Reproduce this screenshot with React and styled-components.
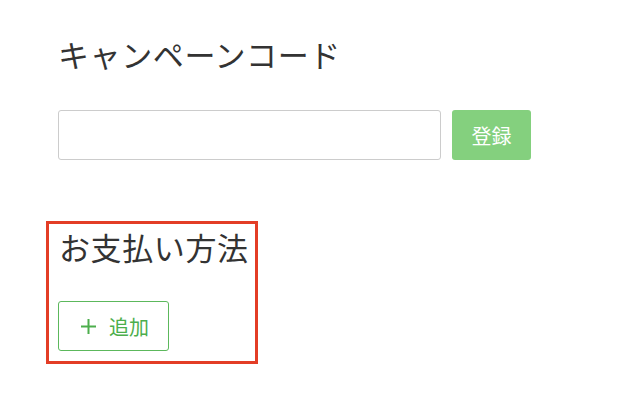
import React from "react";
import styled, { createGlobalStyle } from "styled-components";

const Global = createGlobalStyle`
  html, body { margin: 0; padding: 0; background: #ffffff; }
  body { font-family: "Noto Sans CJK JP", "Noto Sans", sans-serif; color: #333333; }
  * { box-sizing: border-box; }
`;

const Page = styled.div`
  width: 640px;
  height: 412px;
  padding: 36px 0 0 46px;
  display: flex;
  flex-direction: column;
`;

const Title = styled.h2`
  margin: 0 0 0 12px;
  font-size: 31px;
  letter-spacing: 0.6px;
  line-height: 36px;
  font-weight: 400;
  color: #333333;
  white-space: nowrap;
`;

const CodeRow = styled.div`
  display: flex;
  gap: 11px;
  margin: 38px 0 0 12px;
`;

const Input = styled.input`
  width: 383px;
  height: 50px;
  border: 1px solid #cccccc;
  border-radius: 3px;
  padding: 0 12px;
  font-size: 18px;
  outline: none;
`;

const SubmitButton = styled.button`
  width: 79px;
  height: 50px;
  border: none;
  border-radius: 3px;
  background: #84d07e;
  color: #ffffff;
  font-family: inherit;
  font-size: 20px;
  padding: 0;
`;

const Section = styled.section`
  margin-top: 61px;
  width: 212px;
  height: 143px;
  border: 3px solid #e33d26;
  padding: 5px 0 0 9px;
  display: flex;
  flex-direction: column;
  align-items: flex-start;
`;

const SectionTitle = styled(Title)`
  margin: 0 0 0 1px;
`;

const AddButton = styled.button`
  margin-top: 36px;
  width: 111px;
  height: 50px;
  border: 1px solid #5cb85c;
  border-radius: 3px;
  background: #ffffff;
  color: #4cae4c;
  font-family: inherit;
  font-size: 20px;
  display: flex;
  align-items: center;
  justify-content: center;
  gap: 12px;
  padding: 0 0 0 2px;
`;

const Plus = () => (
  <svg width="17" height="17" viewBox="0 0 17 17" aria-hidden="true">
    <path d="M8.5 1v15M1 8.5h15" stroke="#4cae4c" strokeWidth="2" fill="none" />
  </svg>
);

export default function App() {
  return (
    <>
      <Global />
      <Page>
        <Title>キャンペーンコード</Title>
        <CodeRow>
          <Input type="text" />
          <SubmitButton>登録</SubmitButton>
        </CodeRow>
        <Section>
          <SectionTitle>お支払い方法</SectionTitle>
          <AddButton>
            <Plus />
            追加
          </AddButton>
        </Section>
      </Page>
    </>
  );
}
